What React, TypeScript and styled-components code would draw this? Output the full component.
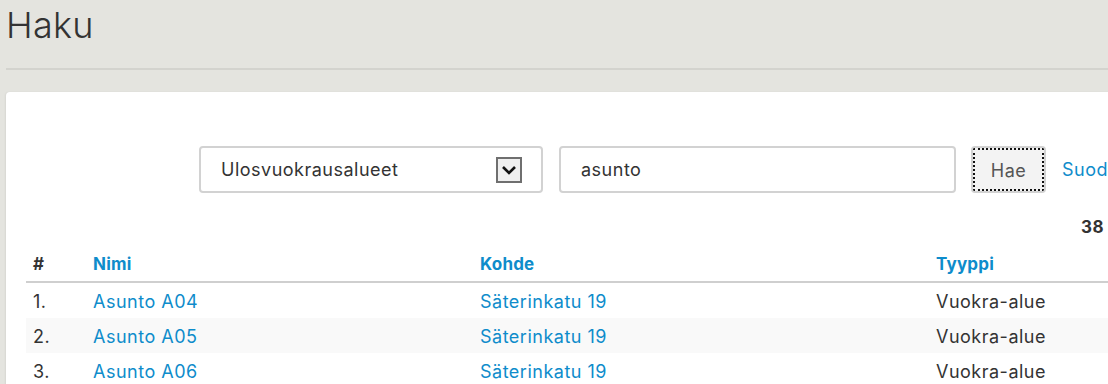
import styled, { createGlobalStyle } from "styled-components";

const GlobalStyle = createGlobalStyle`
  html, body {
    margin: 0;
    padding: 0;
    background: #e4e4df;
    overflow: hidden;
    font-family: Inter, "Noto Sans", sans-serif;
    color: #333;
  }
`;

const Page = styled.div`
  width: 1300px;
  padding-left: 6px;
`;

const Title = styled.h1`
  margin: 0;
  padding: 2px 0 0 0;
  height: 54px;
  font-size: 36px;
  font-weight: 300;
  line-height: 46px;
  letter-spacing: 0.3px;
  color: #333;
`;

const Rule = styled.hr`
  margin: 12px 0 22px;
  border: 0;
  height: 2px;
  background: #d3d3ce;
`;

const Panel = styled.section`
  background: #fff;
  border-radius: 4px 0 0 0;
  box-shadow: -1px 0 2px rgba(0, 0, 0, 0.06);
  padding: 54px 0 0 20px;
  min-height: 300px;
`;

const SearchRow = styled.form`
  display: flex;
  align-items: center;
  gap: 16px;
  padding-left: 173px;
  height: 47px;
`;

const Field = styled.div<{ $width: number }>`
  box-sizing: border-box;
  width: ${({ $width }) => $width}px;
  height: 47px;
  border: 2px solid #d2d2d2;
  border-radius: 4px;
  display: flex;
  align-items: center;
  justify-content: space-between;
  padding: 0 19px 0 20px;
  font-size: 18px;
  letter-spacing: 0.5px;
  color: #333;
`;

const ArrowBox = styled.span`
  box-sizing: border-box;
  width: 26px;
  height: 26px;
  border: 2px solid #6f6f6f;
  background: #efefef;
  display: flex;
  align-items: center;
  justify-content: center;
`;

const SearchButton = styled.button`
  box-sizing: border-box;
  width: 75px;
  height: 47px;
  margin-left: -1px;
  background: #f3f3f3;
  border: 2px solid #d2d2d2;
  border-radius: 4px;
  outline: 2px dotted #111;
  outline-offset: -4px;
  font-family: inherit;
  font-size: 18px;
  letter-spacing: 0.5px;
  color: #555;
  padding: 1px 0 0;
`;

const FilterLink = styled.a`
  color: #0e8ccb;
  font-size: 18px;
  letter-spacing: 0.5px;
  text-decoration: none;
`;

const ResultCount = styled.div`
  padding: 24px 0 0 1055px;
  font-weight: 700;
  font-size: 17px;
  letter-spacing: 0.5px;
  color: #333;
  height: 33px;
`;

const Table = styled.table`
  width: 1260px;
  table-layout: fixed;
  border-collapse: collapse;
  font-size: 18px;
  letter-spacing: 0.5px;
  margin-top: 2px;
`;

const HeadCell = styled.th<{ $width?: number; $plain?: boolean }>`
  box-sizing: border-box;
  text-align: left;
  font-weight: 700;
  font-size: 17px;
  letter-spacing: 0.2px;
  color: ${({ $plain }) => ($plain ? "#333" : "#0e8ccb")};
  width: ${({ $width }) => ($width ? `${$width}px` : "auto")};
  padding: 0 7px 7px;
  height: 30px;
  vertical-align: bottom;
  border-bottom: 2px solid #cfcfcf;
`;

const Row = styled.tr<{ $striped: boolean }>`
  background: ${({ $striped }) => ($striped ? "#f9f9f9" : "#fff")};
`;

const Cell = styled.td<{ $link?: boolean }>`
  padding: 1px 7px 0;
  height: 34px;
  white-space: nowrap;
  color: ${({ $link }) => ($link ? "#0e8ccb" : "#333")};
`;

const rows = [
  { name: "Asunto A04", target: "Säterinkatu 19", type: "Vuokra-alue" },
  { name: "Asunto A05", target: "Säterinkatu 19", type: "Vuokra-alue" },
  { name: "Asunto A06", target: "Säterinkatu 19", type: "Vuokra-alue" },
];

const Chevron = () => (
  <svg width="16" height="10" viewBox="0 0 16 10">
    <path d="M2 2 L8 8 L14 2" fill="none" stroke="#111" strokeWidth="2.6" />
  </svg>
);

const App = () => (
  <Page>
    <GlobalStyle />
    <Title>Haku</Title>
    <Rule />
    <Panel>
      <SearchRow>
        <Field $width={344}>
          Ulosvuokrausalueet
          <ArrowBox>
            <Chevron />
          </ArrowBox>
        </Field>
        <Field $width={397}>asunto</Field>
        <SearchButton type="button">Hae</SearchButton>
        <FilterLink href="#">Suodata</FilterLink>
      </SearchRow>
      <ResultCount>38 hakutulosta</ResultCount>
      <Table>
        <thead>
          <tr>
            <HeadCell $width={60} $plain>#</HeadCell>
            <HeadCell $width={387}>Nimi</HeadCell>
            <HeadCell $width={456}>Kohde</HeadCell>
            <HeadCell>Tyyppi</HeadCell>
          </tr>
        </thead>
        <tbody>
          {rows.map((r, i) => (
            <Row key={r.name} $striped={i % 2 === 1}>
              <Cell>{i + 1}.</Cell>
              <Cell $link>{r.name}</Cell>
              <Cell $link>{r.target}</Cell>
              <Cell>{r.type}</Cell>
            </Row>
          ))}
        </tbody>
      </Table>
    </Panel>
  </Page>
);

export default App;
